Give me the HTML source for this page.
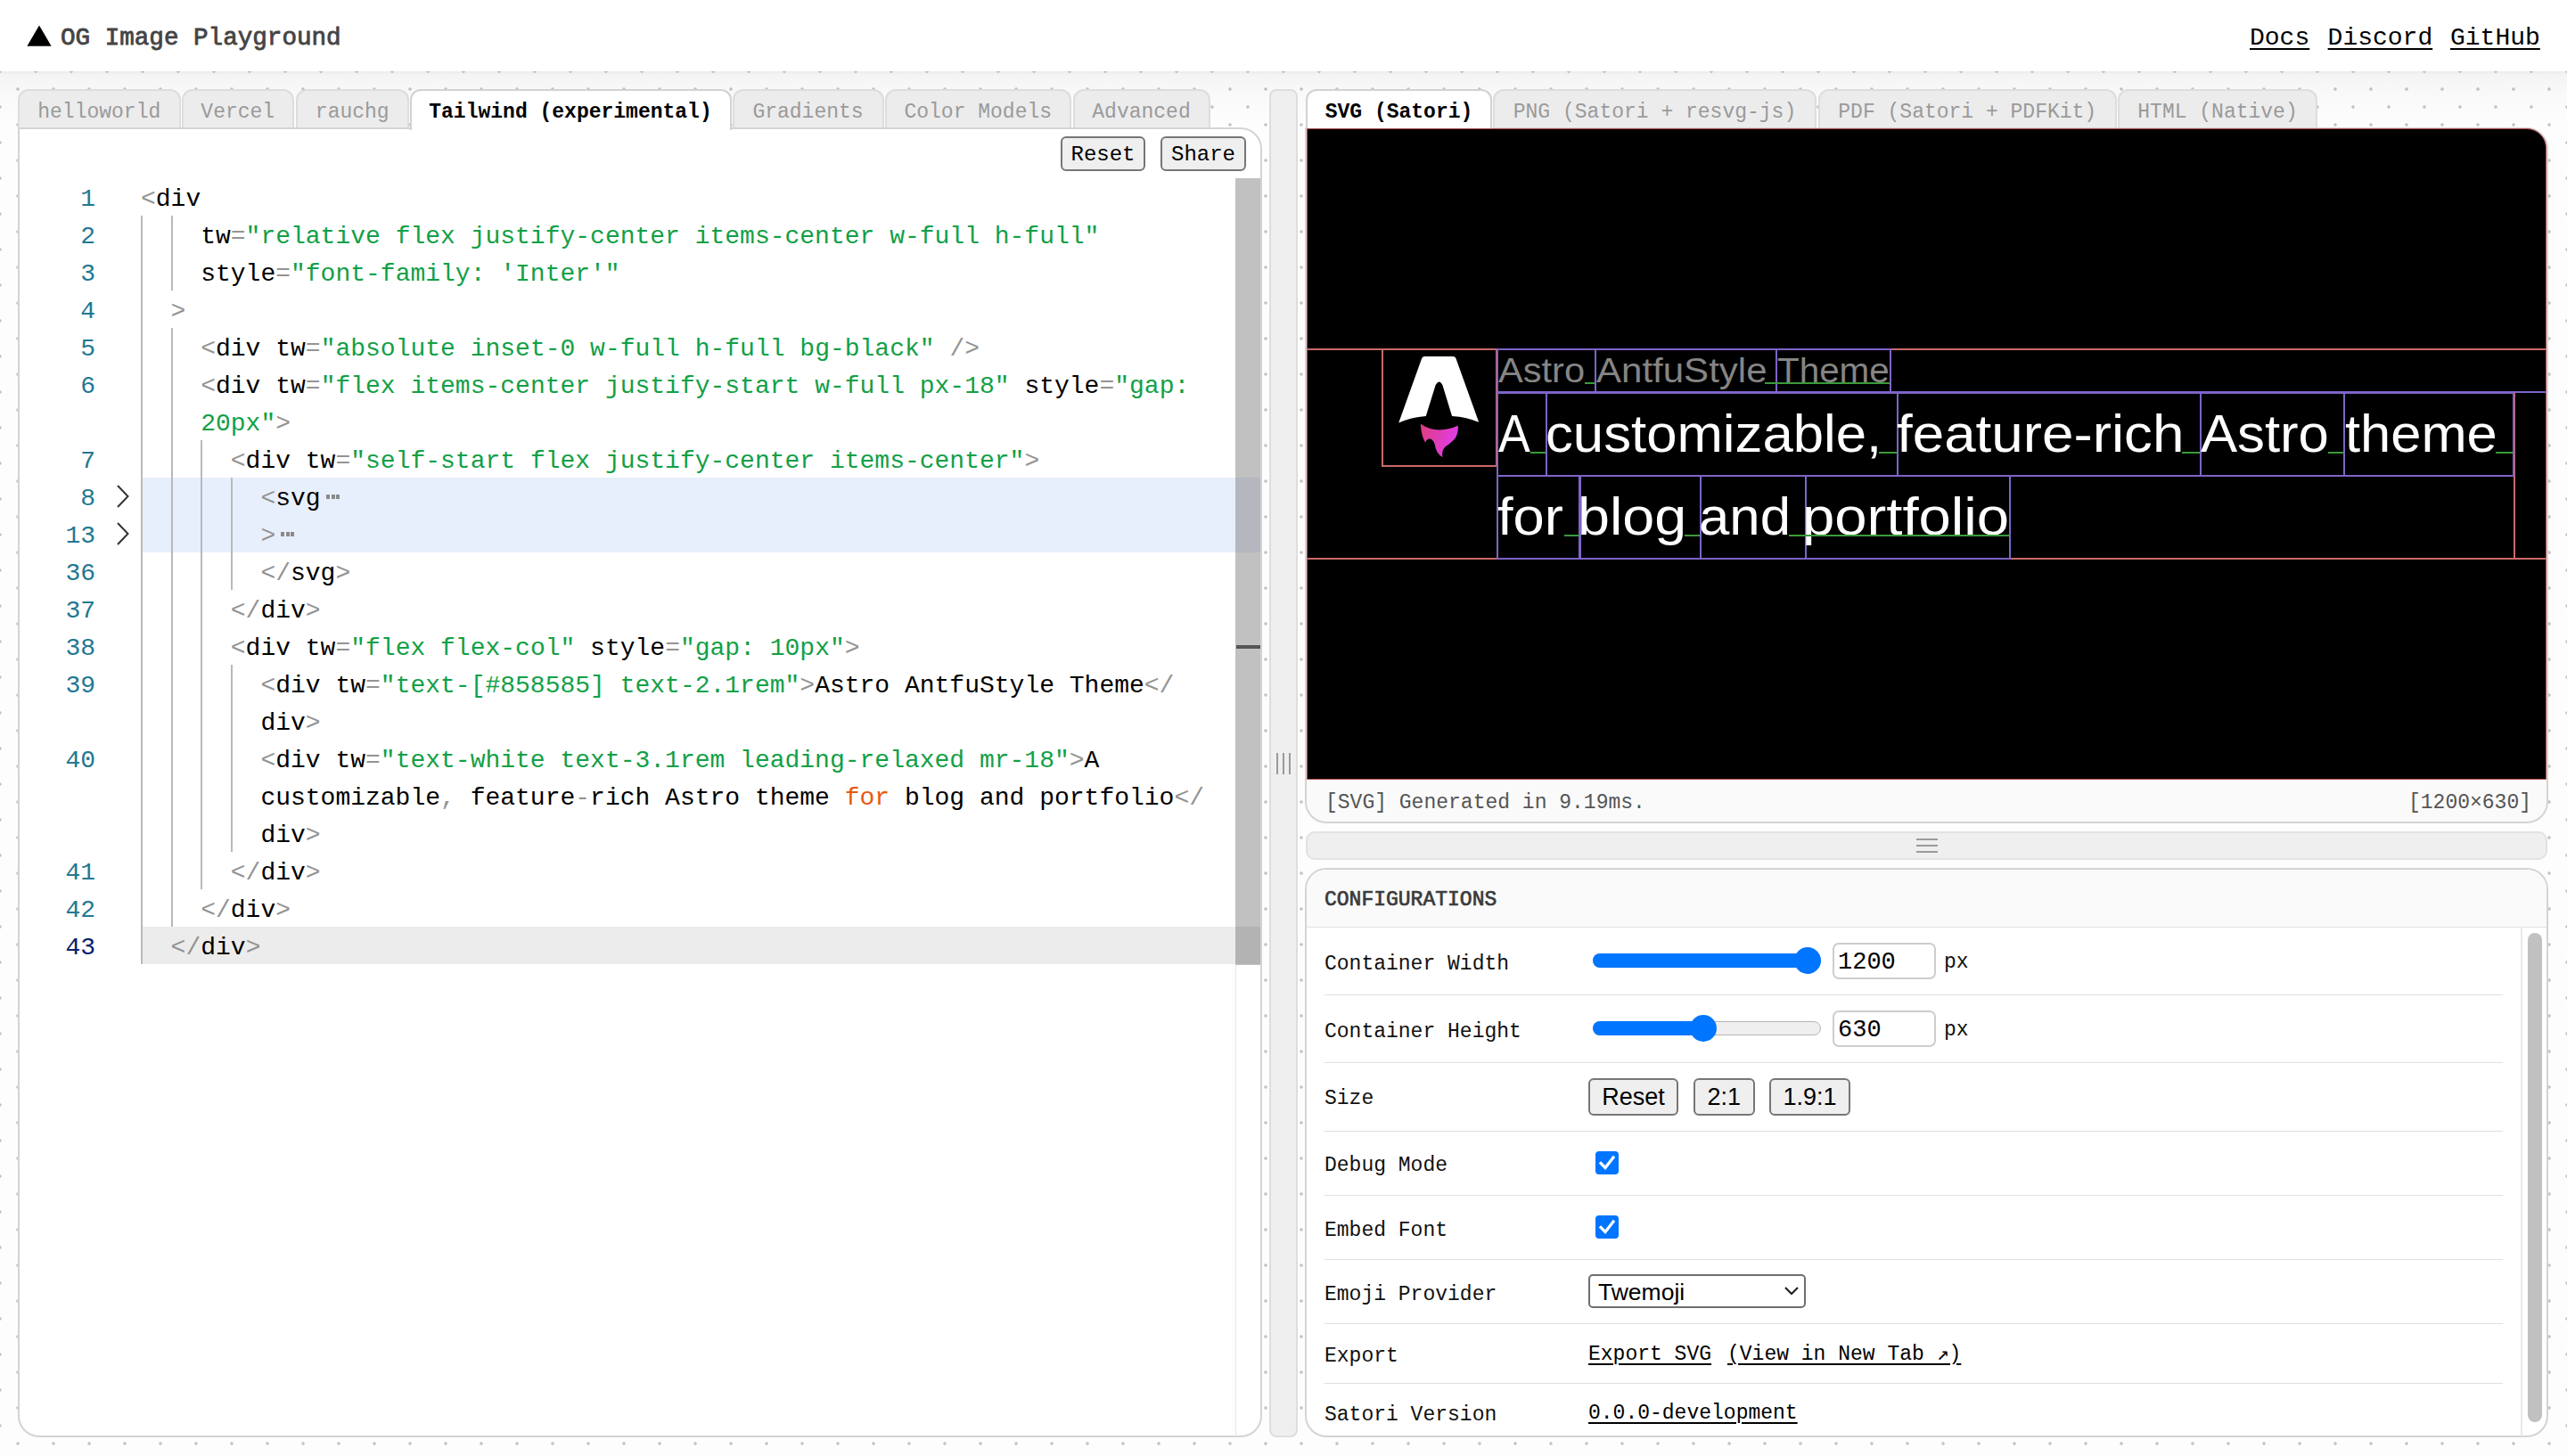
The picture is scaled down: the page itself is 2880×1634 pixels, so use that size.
<!DOCTYPE html><html><head><meta charset="utf-8"><title>OG Image Playground</title><style>
*{box-sizing:border-box;margin:0;padding:0}
html,body{width:2880px;height:1634px;overflow:hidden;background:#fdfdfd}
body{position:relative;font-family:'Liberation Mono', monospace;color:#000}
.a{position:absolute}
.dots{position:absolute;left:0;top:80px;width:2880px;height:1554px;
 background-color:#fdfdfd;
 background-image:radial-gradient(circle at 10px 10px,#c4c4c4 0,#c4c4c4 1.3px,rgba(196,196,196,0) 2.2px),
 radial-gradient(circle at 30px 30px,#c4c4c4 0,#c4c4c4 1.3px,rgba(196,196,196,0) 2.2px);
 background-size:40px 40px;background-position:-10px -10px}
.shade{position:absolute;left:0;top:80px;width:2880px;height:70px;
 background:linear-gradient(rgba(0,0,0,0.07),rgba(0,0,0,0.035) 4px,rgba(0,0,0,0.015) 25px,rgba(0,0,0,0.0) 60px)}
.hdr{position:absolute;left:0;top:0;width:2880px;height:80px;background:#fff}
.t{position:absolute;white-space:pre;line-height:1}
.tab{position:absolute;top:100px;height:44px;border:2px solid #dddddd;border-bottom:none;border-radius:12px 12px 0 0;
 background:#ececec;color:#9a9a9a;font-size:23px;white-space:pre;text-align:center}
.tab span{position:absolute;left:0;right:0;top:13px;line-height:1}
.tab.act{background:#fff;border-color:#d2d2d2;color:#000;font-weight:bold;z-index:3;height:46px}
.panel{position:absolute;background:#fff;border:2px solid #d4d4d4}
.btn{position:absolute;background:#efefef;border:2px solid #767676;border-radius:6px;font-size:24px;color:#000;text-align:center;white-space:pre}
.code{position:absolute;left:0;top:0;font-size:28px;white-space:pre;line-height:42px;height:42px}
.p{color:#939393} .s{color:#12a046} .k{color:#e8590c}
.ln{position:absolute;left:40px;width:67px;text-align:right;font-size:28px;line-height:42px;color:#237893}
.guide{position:absolute;width:2px;background:#b9b9b9}
.dbg{position:absolute;border:2px solid}
.row{position:absolute;left:1486px;width:1322px;height:1px;background:#e0e0e0}
.lbl{position:absolute;left:1486px;font-size:23px;color:#111;white-space:pre;line-height:1}
</style></head><body>
<div class="dots"></div><div class="shade"></div>
<div class="hdr"></div>
<svg class="a" style="left:29px;top:27px" width="30" height="26" viewBox="0 0 30 26"><polygon points="15,1.5 28.6,24.8 1.4,24.8" fill="#000"/></svg>
<div class="t" style="left:68px;top:29px;font-size:27.6px;color:#444;-webkit-text-stroke:0.8px #444">OG Image Playground</div>
<div class="t" style="left:2524px;top:29px;font-size:28px;color:#000;text-decoration:underline;text-underline-offset:4px;text-decoration-thickness:2px">Docs</div>
<div class="t" style="left:2611.6px;top:29px;font-size:28px;color:#000;text-decoration:underline;text-underline-offset:4px;text-decoration-thickness:2px">Discord</div>
<div class="t" style="left:2749px;top:29px;font-size:28px;color:#000;text-decoration:underline;text-underline-offset:4px;text-decoration-thickness:2px">GitHub</div>
<div class="tab" style="left:20.0px;width:182.5px;"><span>helloworld</span></div>
<div class="tab" style="left:203.5px;width:126.5px;"><span>Vercel</span></div>
<div class="tab" style="left:331.5px;width:127.5px;"><span>rauchg</span></div>
<div class="tab act" style="left:459.5px;width:361.0px;height:46px"><span>Tailwind (experimental)</span></div>
<div class="tab" style="left:821.5px;width:170.0px;"><span>Gradients</span></div>
<div class="tab" style="left:992.5px;width:209.5px;"><span>Color Models</span></div>
<div class="tab" style="left:1203.5px;width:154.0px;"><span>Advanced</span></div>
<div class="tab act" style="left:1465.0px;width:209.0px;height:44px"><span>SVG (Satori)</span></div>
<div class="tab" style="left:1675.0px;width:363.0px;"><span>PNG (Satori + resvg-js)</span></div>
<div class="tab" style="left:2039.5px;width:335.5px;"><span>PDF (Satori + PDFKit)</span></div>
<div class="tab" style="left:2376.0px;width:224.0px;"><span>HTML (Native)</span></div>
<div class="panel" style="left:20px;top:143px;width:1396px;height:1470px;border-radius:0 24px 24px 24px;z-index:1"></div>
<div class="a" style="left:0;top:0;width:2880px;height:1634px;z-index:2">
<div class="btn" style="left:1190px;top:152.5px;width:95px;height:39px;line-height:37px">Reset</div>
<div class="btn" style="left:1302px;top:152.5px;width:96px;height:39px;line-height:37px">Share</div>
<div class="a" style="left:158px;top:536px;width:1256px;height:84px;background:#e8effc"></div>
<div class="a" style="left:158px;top:1040px;width:1228px;height:42px;background:#ececec"></div>
<div class="a" style="left:1386px;top:200px;width:1px;height:1412px;background:#e6e6e6"></div>
<div class="a" style="left:1386px;top:200px;width:28px;height:883px;background:#c1c1c1"></div>
<div class="a" style="left:1386px;top:536px;width:28px;height:84px;background:rgba(40,80,160,0.08)"></div>
<div class="a" style="left:1386px;top:1040px;width:28px;height:42px;background:rgba(0,0,0,0.07)"></div>
<div class="a" style="left:1387px;top:724px;width:27px;height:4px;background:#555"></div>
<div class="guide" style="left:158.0px;top:242px;height:840px"></div>
<div class="guide" style="left:191.6px;top:242px;height:84px"></div>
<div class="guide" style="left:191.6px;top:368px;height:672px"></div>
<div class="guide" style="left:225.2px;top:494px;height:504px"></div>
<div class="guide" style="left:258.8px;top:536px;height:126px"></div>
<div class="guide" style="left:258.8px;top:746px;height:210px"></div>
<div class="ln" style="top:202.5px;color:#237893">1</div>
<div class="code" style="left:158.0px;top:202.5px"><span class="p">&lt;</span>div</div>
<div class="ln" style="top:244.5px;color:#237893">2</div>
<div class="code" style="left:225.2px;top:244.5px">tw<span class="p">=</span><span class="s">&quot;relative flex justify-center items-center w-full h-full&quot;</span></div>
<div class="ln" style="top:286.5px;color:#237893">3</div>
<div class="code" style="left:225.2px;top:286.5px">style<span class="p">=</span><span class="s">&quot;font-family: &#x27;Inter&#x27;&quot;</span></div>
<div class="ln" style="top:328.5px;color:#237893">4</div>
<div class="code" style="left:191.6px;top:328.5px"><span class="p">&gt;</span></div>
<div class="ln" style="top:370.5px;color:#237893">5</div>
<div class="code" style="left:225.2px;top:370.5px"><span class="p">&lt;</span>div tw<span class="p">=</span><span class="s">&quot;absolute inset-0 w-full h-full bg-black&quot;</span> <span class="p">/&gt;</span></div>
<div class="ln" style="top:412.5px;color:#237893">6</div>
<div class="code" style="left:225.2px;top:412.5px"><span class="p">&lt;</span>div tw<span class="p">=</span><span class="s">&quot;flex items-center justify-start w-full px-18&quot;</span> style<span class="p">=</span><span class="s">&quot;gap:</span></div>
<div class="code" style="left:225.2px;top:454.5px"><span class="s">20px&quot;</span><span class="p">&gt;</span></div>
<div class="ln" style="top:496.5px;color:#237893">7</div>
<div class="code" style="left:258.8px;top:496.5px"><span class="p">&lt;</span>div tw<span class="p">=</span><span class="s">&quot;self-start flex justify-center items-center&quot;</span><span class="p">&gt;</span></div>
<div class="ln" style="top:538.5px;color:#237893">8</div>
<div class="code" style="left:292.4px;top:538.5px"><span class="p">&lt;</span>svg</div>
<div class="ln" style="top:580.5px;color:#237893">13</div>
<div class="code" style="left:292.4px;top:580.5px"><span class="p">&gt;</span></div>
<div class="ln" style="top:622.5px;color:#237893">36</div>
<div class="code" style="left:292.4px;top:622.5px"><span class="p">&lt;/</span>svg<span class="p">&gt;</span></div>
<div class="ln" style="top:664.5px;color:#237893">37</div>
<div class="code" style="left:258.8px;top:664.5px"><span class="p">&lt;/</span>div<span class="p">&gt;</span></div>
<div class="ln" style="top:706.5px;color:#237893">38</div>
<div class="code" style="left:258.8px;top:706.5px"><span class="p">&lt;</span>div tw<span class="p">=</span><span class="s">&quot;flex flex-col&quot;</span> style<span class="p">=</span><span class="s">&quot;gap: 10px&quot;</span><span class="p">&gt;</span></div>
<div class="ln" style="top:748.5px;color:#237893">39</div>
<div class="code" style="left:292.4px;top:748.5px"><span class="p">&lt;</span>div tw<span class="p">=</span><span class="s">&quot;text-[#858585] text-2.1rem&quot;</span><span class="p">&gt;</span>Astro AntfuStyle Theme<span class="p">&lt;/</span></div>
<div class="code" style="left:292.4px;top:790.5px">div<span class="p">&gt;</span></div>
<div class="ln" style="top:832.5px;color:#237893">40</div>
<div class="code" style="left:292.4px;top:832.5px"><span class="p">&lt;</span>div tw<span class="p">=</span><span class="s">&quot;text-white text-3.1rem leading-relaxed mr-18&quot;</span><span class="p">&gt;</span>A</div>
<div class="code" style="left:292.4px;top:874.5px">customizable<span class="p">,</span> feature<span class="p">-</span>rich Astro theme <span class="k">for</span> blog and portfolio<span class="p">&lt;/</span></div>
<div class="code" style="left:292.4px;top:916.5px">div<span class="p">&gt;</span></div>
<div class="ln" style="top:958.5px;color:#237893">41</div>
<div class="code" style="left:258.8px;top:958.5px"><span class="p">&lt;/</span>div<span class="p">&gt;</span></div>
<div class="ln" style="top:1000.5px;color:#237893">42</div>
<div class="code" style="left:225.2px;top:1000.5px"><span class="p">&lt;/</span>div<span class="p">&gt;</span></div>
<div class="ln" style="top:1042.5px;color:#0b216f">43</div>
<div class="code" style="left:191.6px;top:1042.5px"><span class="p">&lt;/</span>div<span class="p">&gt;</span></div>
<svg class="a" style="left:128px;top:542px" width="20" height="30" viewBox="0 0 20 30"><polyline points="4,3 15.5,15 4,27" fill="none" stroke="#333" stroke-width="2"/></svg>
<svg class="a" style="left:128px;top:584px" width="20" height="30" viewBox="0 0 20 30"><polyline points="4,3 15.5,15 4,27" fill="none" stroke="#333" stroke-width="2"/></svg>
<div class="a" style="left:366.0px;top:555px;width:4px;height:5px;background:#8a8a8a"></div>
<div class="a" style="left:371.5px;top:555px;width:4px;height:5px;background:#8a8a8a"></div>
<div class="a" style="left:377.0px;top:555px;width:4px;height:5px;background:#8a8a8a"></div>
<div class="a" style="left:315.0px;top:597px;width:4px;height:5px;background:#8a8a8a"></div>
<div class="a" style="left:320.5px;top:597px;width:4px;height:5px;background:#8a8a8a"></div>
<div class="a" style="left:326.0px;top:597px;width:4px;height:5px;background:#8a8a8a"></div>
</div>
<div class="a" style="left:1424px;top:100px;width:32px;height:1513px;background:#efefef;border:2px solid #dedede;border-radius:8px"></div>
<div class="a" style="left:1432px;top:845px;width:2px;height:24px;background:#9a9a9a"></div>
<div class="a" style="left:1439px;top:845px;width:2px;height:24px;background:#9a9a9a"></div>
<div class="a" style="left:1446px;top:845px;width:2px;height:24px;background:#9a9a9a"></div>
<div class="panel" style="left:1464px;top:143px;width:1395px;height:781px;border-radius:0 24px 24px 24px;background:#fafafa;z-index:1"></div>
<div class="a" style="left:0;top:0;width:2880px;height:1634px;z-index:2">
<div class="a" style="left:1466px;top:144px;width:1391px;height:731px;background:#000;border:1px solid #b05050;border-radius:0 22px 0 0"></div>
<div class="t" style="left:1487px;top:890px;font-size:23px;color:#555">[SVG] Generated in 9.19ms.</div>
<div class="t" style="left:2702px;top:890px;font-size:23px;color:#555">[1200×630]</div>
</div>
<div class="a" style="left:0;top:0;width:2880px;height:1634px;z-index:4">
<div class="a" style="left:1466px;top:391px;width:1391px;height:2px;background:#c96a68"></div>
<div class="a" style="left:1466px;top:625.5px;width:1391px;height:2px;background:#c96a68"></div>
<div class="dbg" style="left:1549.6px;top:391.0px;width:130.4px;height:133.0px;border-color:#c96a68;"></div>
<div class="dbg" style="left:1678.8px;top:391.0px;width:112.0px;height:50.0px;border-color:#7d64c8;"></div>
<div class="dbg" style="left:1788.8px;top:391.0px;width:205.6px;height:50.0px;border-color:#7d64c8;"></div>
<div class="dbg" style="left:1992.4px;top:391.0px;width:129.6px;height:50.0px;border-color:#7d64c8;"></div>
<div class="a" style="left:1679px;top:439px;width:1178px;height:2px;background:#7d64c8"></div>
<div class="a" style="left:2819.5px;top:440px;width:2px;height:187px;background:#c96a68"></div>
<div class="dbg" style="left:1678.8px;top:439.5px;width:57.6px;height:95.0px;border-color:#7d64c8;"></div>
<div class="dbg" style="left:1734.4px;top:439.5px;width:395.2px;height:95.0px;border-color:#7d64c8;"></div>
<div class="dbg" style="left:2127.6px;top:439.5px;width:342.1px;height:95.0px;border-color:#7d64c8;"></div>
<div class="dbg" style="left:2467.7px;top:439.5px;width:163.6px;height:95.0px;border-color:#7d64c8;"></div>
<div class="dbg" style="left:2629.3px;top:439.5px;width:191.3px;height:95.0px;border-color:#7d64c8;"></div>
<div class="dbg" style="left:1678.8px;top:532.5px;width:94.7px;height:95.0px;border-color:#7d64c8;"></div>
<div class="dbg" style="left:1771.5px;top:532.5px;width:137.2px;height:95.0px;border-color:#7d64c8;"></div>
<div class="dbg" style="left:1906.7px;top:532.5px;width:120.5px;height:95.0px;border-color:#7d64c8;"></div>
<div class="dbg" style="left:2025.2px;top:532.5px;width:231.2px;height:95.0px;border-color:#7d64c8;"></div>
<div class="t" style="left:1680.63px;top:396.29px;font-family:'Liberation Sans', sans-serif;font-size:39.00px;line-height:39.00px;color:#858585;transform:scaleX(1.0663);transform-origin:0 0">Astro</div>
<div class="t" style="left:1790.53px;top:396.29px;font-family:'Liberation Sans', sans-serif;font-size:39.00px;line-height:39.00px;color:#858585;transform:scaleX(1.0775);transform-origin:0 0">AntfuStyle</div>
<div class="t" style="left:1993.92px;top:396.29px;font-family:'Liberation Sans', sans-serif;font-size:39.00px;line-height:39.00px;color:#858585;transform:scaleX(1.0360);transform-origin:0 0">Theme</div>
<div class="t" style="left:1681.11px;top:456.86px;font-family:'Liberation Sans', sans-serif;font-size:59.70px;line-height:59.70px;color:#fff;transform:scaleX(0.8990);transform-origin:0 0">A</div>
<div class="t" style="left:1733.93px;top:456.86px;font-family:'Liberation Sans', sans-serif;font-size:59.70px;line-height:59.70px;color:#fff;transform:scaleX(1.0336);transform-origin:0 0">customizable,</div>
<div class="t" style="left:2128.05px;top:456.86px;font-family:'Liberation Sans', sans-serif;font-size:59.70px;line-height:59.70px;color:#fff;transform:scaleX(1.0679);transform-origin:0 0">feature-rich</div>
<div class="t" style="left:2469.10px;top:456.86px;font-family:'Liberation Sans', sans-serif;font-size:59.70px;line-height:59.70px;color:#fff;transform:scaleX(1.0328);transform-origin:0 0">Astro</div>
<div class="t" style="left:2630.88px;top:456.86px;font-family:'Liberation Sans', sans-serif;font-size:59.70px;line-height:59.70px;color:#fff;transform:scaleX(1.0290);transform-origin:0 0">theme</div>
<div class="t" style="left:1680.36px;top:549.86px;font-family:'Liberation Sans', sans-serif;font-size:59.70px;line-height:59.70px;color:#fff;transform:scaleX(1.0610);transform-origin:0 0">for</div>
<div class="t" style="left:1770.30px;top:549.86px;font-family:'Liberation Sans', sans-serif;font-size:59.70px;line-height:59.70px;color:#fff;transform:scaleX(1.0830);transform-origin:0 0">blog</div>
<div class="t" style="left:1906.43px;top:549.86px;font-family:'Liberation Sans', sans-serif;font-size:59.70px;line-height:59.70px;color:#fff;transform:scaleX(1.0340);transform-origin:0 0">and</div>
<div class="t" style="left:2022.46px;top:549.86px;font-family:'Liberation Sans', sans-serif;font-size:59.70px;line-height:59.70px;color:#fff;transform:scaleX(1.0933);transform-origin:0 0">portfolio</div>
<div class="a" style="left:1777.5px;top:428.5px;width:11.3px;height:2px;background:#3a9a3a"></div>
<div class="a" style="left:1980.0px;top:428.5px;width:140.0px;height:2px;background:#3a9a3a"></div>
<div class="a" style="left:1717.0px;top:506.5px;width:17.4px;height:2px;background:#3a9a3a"></div>
<div class="a" style="left:2108.0px;top:506.5px;width:19.6px;height:2px;background:#3a9a3a"></div>
<div class="a" style="left:2448.0px;top:506.5px;width:19.7px;height:2px;background:#3a9a3a"></div>
<div class="a" style="left:2612.0px;top:506.5px;width:17.3px;height:2px;background:#3a9a3a"></div>
<div class="a" style="left:2800.0px;top:506.5px;width:18.6px;height:2px;background:#3a9a3a"></div>
<div class="a" style="left:1755.0px;top:599.5px;width:16.5px;height:2px;background:#3a9a3a"></div>
<div class="a" style="left:1890.0px;top:599.5px;width:16.7px;height:2px;background:#3a9a3a"></div>
<div class="a" style="left:2007.0px;top:599.5px;width:247.4px;height:2px;background:#3a9a3a"></div>
<svg class="a" style="left:1550px;top:390px" width="140" height="140" viewBox="0 0 1456 1456">
<path d="M470 125 Q478 105 505 105 L835 105 Q860 105 868 128 L1135 872 Q1000 812 822 800 L712 440 Q690 395 668 400 Q648 405 630 440 L518 800 Q340 812 200 880 L470 125 Z" fill="#fff"/>
<defs><linearGradient id="fl" x1="0" y1="0" x2="1" y2="0.3"><stop offset="0" stop-color="#dc3f7c"/><stop offset="1" stop-color="#e23ce8"/></linearGradient></defs>
<path d="M455 893 Q560 962 672 962 Q800 958 892 910 Q898 1010 852 1068 Q800 1122 742 1160 Q698 1205 712 1282 Q648 1240 630 1172 Q616 1082 572 1066 Q530 1060 510 1108 Q462 1030 455 893 Z" fill="url(#fl)"/>
</svg>
</div>
<div class="a" style="left:1465px;top:933px;width:1393px;height:32px;background:#efefef;border:2px solid #e2e2e2;border-radius:10px"></div>
<div class="a" style="left:2150px;top:941px;width:24px;height:2px;background:#9a9a9a"></div>
<div class="a" style="left:2150px;top:948px;width:24px;height:2px;background:#9a9a9a"></div>
<div class="a" style="left:2150px;top:955px;width:24px;height:2px;background:#9a9a9a"></div>
<div class="panel" style="left:1464px;top:974px;width:1395px;height:639px;border-radius:24px;z-index:1;overflow:hidden"><div class="a" style="left:0;top:0;width:1391px;height:65px;background:#fafafa;border-bottom:1px solid #e2e2e2"></div></div>
<div class="a" style="left:0;top:0;width:2880px;height:1634px;z-index:2">
<div class="t" style="left:1486px;top:999px;font-size:23px;color:#3a3a3a;-webkit-text-stroke:0.7px #3a3a3a">CONFIGURATIONS</div>
<div class="a" style="left:2828px;top:1040px;width:2px;height:572px;background:#e8e8e8"></div>
<div class="a" style="left:2836px;top:1047px;width:16px;height:549px;background:#c1c1c1;border-radius:8px"></div>
<div class="row" style="top:1116px"></div>
<div class="row" style="top:1192px"></div>
<div class="row" style="top:1269px"></div>
<div class="row" style="top:1341px"></div>
<div class="row" style="top:1413px"></div>
<div class="row" style="top:1485px"></div>
<div class="row" style="top:1552px"></div>
<div class="lbl" style="top:1070.5px">Container Width</div>
<div class="lbl" style="top:1146.5px">Container Height</div>
<div class="lbl" style="top:1221.5px">Size</div>
<div class="lbl" style="top:1296.9px">Debug Mode</div>
<div class="lbl" style="top:1369.5px">Embed Font</div>
<div class="lbl" style="top:1441.5px">Emoji Provider</div>
<div class="lbl" style="top:1510.5px">Export</div>
<div class="lbl" style="top:1576.5px">Satori Version</div>
<div class="a" style="left:1787px;top:1070px;width:256px;height:16px;border-radius:8px;background:#efefef;border:1px solid #b5b5b5"></div>
<div class="a" style="left:1787px;top:1070px;width:241px;height:16px;border-radius:8px 0 0 8px;background:#0075ff"></div>
<div class="a" style="left:2013px;top:1063px;width:30px;height:30px;border-radius:15px;background:#0075ff"></div>
<div class="a" style="left:1787px;top:1146px;width:256px;height:16px;border-radius:8px;background:#efefef;border:1px solid #b5b5b5"></div>
<div class="a" style="left:1787px;top:1146px;width:124px;height:16px;border-radius:8px 0 0 8px;background:#0075ff"></div>
<div class="a" style="left:1896px;top:1139px;width:30px;height:30px;border-radius:15px;background:#0075ff"></div>
<div class="a" style="left:2056px;top:1058px;width:116px;height:41px;border:2px solid #cdcdcd;border-radius:7px;background:#fff"></div>
<div class="t" style="left:2062px;top:1067px;font-size:27px;color:#000">1200</div>
<div class="t" style="left:2181px;top:1069px;font-size:23px;color:#111">px</div>
<div class="a" style="left:2056px;top:1134px;width:116px;height:41px;border:2px solid #cdcdcd;border-radius:7px;background:#fff"></div>
<div class="t" style="left:2062px;top:1143px;font-size:27px;color:#000">630</div>
<div class="t" style="left:2181px;top:1145px;font-size:23px;color:#111">px</div>
<div class="btn" style="left:1782px;top:1209.5px;width:101px;height:42px;line-height:38px;font-family:'Liberation Sans', sans-serif;font-size:27px">Reset</div>
<div class="btn" style="left:1900px;top:1209.5px;width:68.5px;height:42px;line-height:38px;font-family:'Liberation Sans', sans-serif;font-size:27px">2:1</div>
<div class="btn" style="left:1985px;top:1209.5px;width:91px;height:42px;line-height:38px;font-family:'Liberation Sans', sans-serif;font-size:27px">1.9:1</div>
<svg class="a" style="left:1789.5px;top:1292px" width="26" height="26" viewBox="0 0 26 26"><rect x="0" y="0" width="26" height="26" rx="4" fill="#0075ff"/><polyline points="6,13.5 11,18.5 20,7" fill="none" stroke="#fff" stroke-width="3.2" stroke-linecap="square"/></svg>
<svg class="a" style="left:1789.5px;top:1364px" width="26" height="26" viewBox="0 0 26 26"><rect x="0" y="0" width="26" height="26" rx="4" fill="#0075ff"/><polyline points="6,13.5 11,18.5 20,7" fill="none" stroke="#fff" stroke-width="3.2" stroke-linecap="square"/></svg>
<div class="a" style="left:1782px;top:1430px;width:244px;height:38px;border:2px solid #6e6e6e;border-radius:5px;background:#fff"></div>
<div class="t" style="left:1793px;top:1437px;font-family:'Liberation Sans', sans-serif;font-size:26.5px;color:#000">Twemoji</div>
<svg class="a" style="left:2001px;top:1443px" width="18" height="12" viewBox="0 0 18 12"><polyline points="2,2 9,9 16,2" fill="none" stroke="#222" stroke-width="2.2"/></svg>
<div class="t" style="left:1782px;top:1509px;font-size:23px;color:#000;text-decoration:underline;text-underline-offset:4px;text-decoration-thickness:2px">Export SVG</div>
<div class="t" style="left:1938px;top:1509px;font-size:23px;color:#000;text-decoration:underline;text-underline-offset:4px;text-decoration-thickness:2px">(View in New Tab ↗)</div>
<div class="t" style="left:1782px;top:1575px;font-size:23px;color:#000;text-decoration:underline;text-underline-offset:4px;text-decoration-thickness:2px">0.0.0-development</div>
</div>
</body></html>
